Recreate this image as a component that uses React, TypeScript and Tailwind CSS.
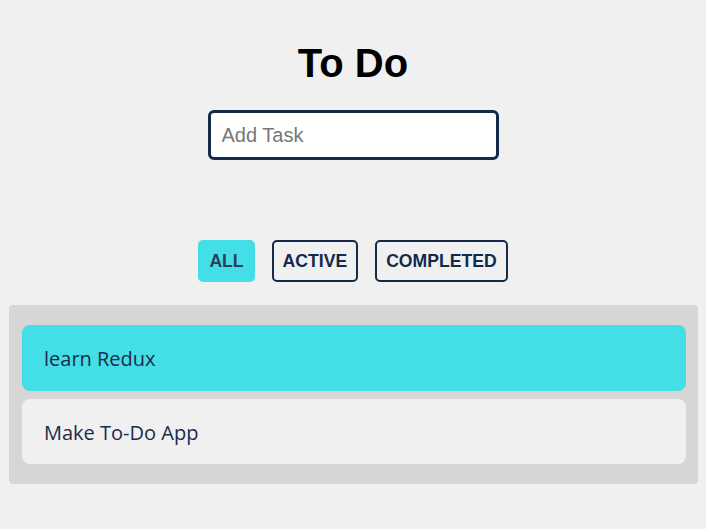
import React, { useState } from "react";

type Filter = "ALL" | "ACTIVE" | "COMPLETED";

const todos = [
  { id: 1, text: "learn Redux", done: true },
  { id: 2, text: "Make To-Do App", done: false },
];

export default function App() {
  const [filter, setFilter] = useState<Filter>("ALL");

  const filters: Filter[] = ["ALL", "ACTIVE", "COMPLETED"];

  return (
    <div className="min-h-[529px] bg-[#f0f0f0] pt-[39px] font-['Liberation_Sans',Arial,sans-serif]">
      {/* Header */}
      <h1 className="text-center text-[40px] leading-[48px] font-bold text-black">To Do</h1>

      {/* New task input */}
      <div className="mt-[23px] flex justify-center">
        <input
          type="text"
          placeholder="Add Task"
          className="h-[50px] w-[291px] rounded-[6px] border-[3px] border-[#142a4a] bg-white px-[11px] text-[20px] text-[#222] placeholder:text-[#777] outline-none"
        />
      </div>

      {/* Filters */}
      <div className="mt-[80px] flex justify-center gap-[17px]">
        {filters.map((f) => (
          <button
            key={f}
            onClick={() => setFilter(f)}
            className={`h-[42px] rounded-[5px] border-2 px-[9px] text-[17.6px] font-bold ${
              filter === f
                ? "border-[#44dfe6] bg-[#44dfe6] text-[#2b3f5c]"
                : "border-[#142a4a] bg-transparent text-[#142a4a]"
            }`}
          >
            {f}
          </button>
        ))}
      </div>

      {/* Task list */}
      <div className="ml-[9px] mt-[23px] flex w-[689px] flex-col gap-[8px] rounded-[4px] bg-[#d6d6d6] pb-[20px] pl-[13px] pr-[12px] pt-[20px]">
        {todos
          .filter((t) => (filter === "ALL" ? true : filter === "ACTIVE" ? !t.done : t.done))
          .map((t) => (
            <div
              key={t.id}
              className={`flex h-[65.5px] items-center rounded-[8px] px-[22px] pt-[3px] font-['Open_Sans',sans-serif] text-[20px] text-[#1c2b4a] ${
                t.done ? "bg-[#44dfe6]" : "bg-[#f0f0f0]"
              }`}
            >
              {t.text}
            </div>
          ))}
      </div>
    </div>
  );
}
